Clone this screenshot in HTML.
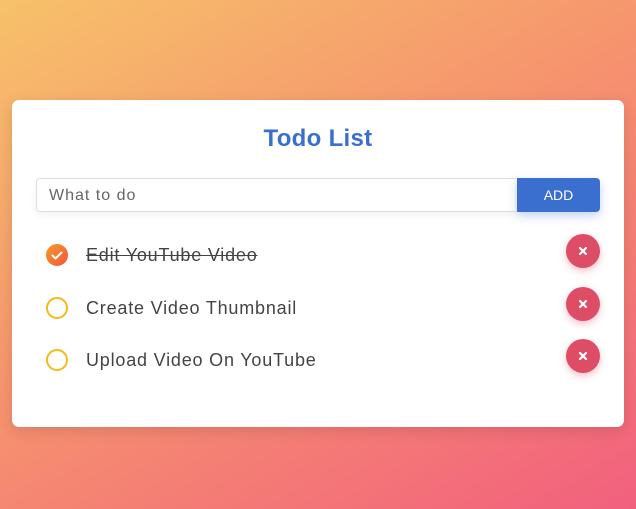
<!DOCTYPE html>
<html><head><style>
html,body{margin:0;width:636px;height:509px;overflow:hidden}
body{background:linear-gradient(150deg,#f7c16a 0%,#f6946e 45%,#f2607e 100%);font-family:"Liberation Sans",sans-serif;position:relative}
.card{position:absolute;left:12px;top:100px;width:612px;height:327px;background:#fff;border-radius:7px;box-shadow:0 4px 14px rgba(0,0,0,.12)}
h1{position:absolute;left:0;right:0;top:25px;margin:0;text-align:center;color:#3a6fcf;font-size:24px;font-weight:bold;letter-spacing:0.3px}
.inp{position:absolute;left:24px;top:78px;width:480px;height:34px;border:1px solid #ddd;border-right:none;border-radius:4px 0 0 4px;box-sizing:border-box;box-shadow:0 3px 8px rgba(0,0,0,.06)}
.inp span{position:absolute;left:12px;top:8px;font-size:16px;color:#666;letter-spacing:1px}
.add{position:absolute;left:505px;top:78px;width:83px;height:34px;background:#3a6fcf;color:#fff;border-radius:0 4px 4px 0;font-size:14px;text-align:center;line-height:34px;box-shadow:0 4px 10px rgba(58,111,207,.3)}
.item{position:absolute;left:34px;height:24px;font-size:18px;color:#444}
.item .c{position:absolute;left:0;top:0;width:18px;height:18px;border:2px solid #f7b91a;border-radius:50%}
.item .t{position:absolute;left:40px;top:1px;white-space:nowrap;letter-spacing:0.8px}
.done .c{border:none;width:22px;height:22px;background:linear-gradient(135deg,#f79a2c,#f2553a)}
.done .t{text-decoration:line-through}
.x{position:absolute;left:554px;width:34px;height:34px;border-radius:50%;background:#dd4d66;box-shadow:0 3px 8px rgba(221,77,102,.35)}
.x svg{position:absolute;left:13px;top:13px}
</style></head><body>
<div class="card">
<h1>Todo List</h1>
<div class="inp"><span>What to do</span></div>
<div class="add">ADD</div>
<div class="item done" style="top:144px"><div class="c"><svg width="22" height="22" viewBox="0 0 22 22"><path d="M6.5 11.5l3 3 6-6" stroke="#fff" stroke-width="2" fill="none" stroke-linecap="round" stroke-linejoin="round"/></svg></div><div class="t">Edit YouTube Video</div></div>
<div class="x" style="top:134px"><svg width="8" height="8" viewBox="0 0 8 8"><path d="M1 1L7 7M7 1L1 7" stroke="#fff" stroke-width="2.2" stroke-linecap="round"/></svg></div>
<div class="item" style="top:197px"><div class="c"></div><div class="t">Create Video Thumbnail</div></div>
<div class="x" style="top:187px"><svg width="8" height="8" viewBox="0 0 8 8"><path d="M1 1L7 7M7 1L1 7" stroke="#fff" stroke-width="2.2" stroke-linecap="round"/></svg></div>
<div class="item" style="top:249px"><div class="c"></div><div class="t">Upload Video On YouTube</div></div>
<div class="x" style="top:239px"><svg width="8" height="8" viewBox="0 0 8 8"><path d="M1 1L7 7M7 1L1 7" stroke="#fff" stroke-width="2.2" stroke-linecap="round"/></svg></div>
</div>
</body></html>
